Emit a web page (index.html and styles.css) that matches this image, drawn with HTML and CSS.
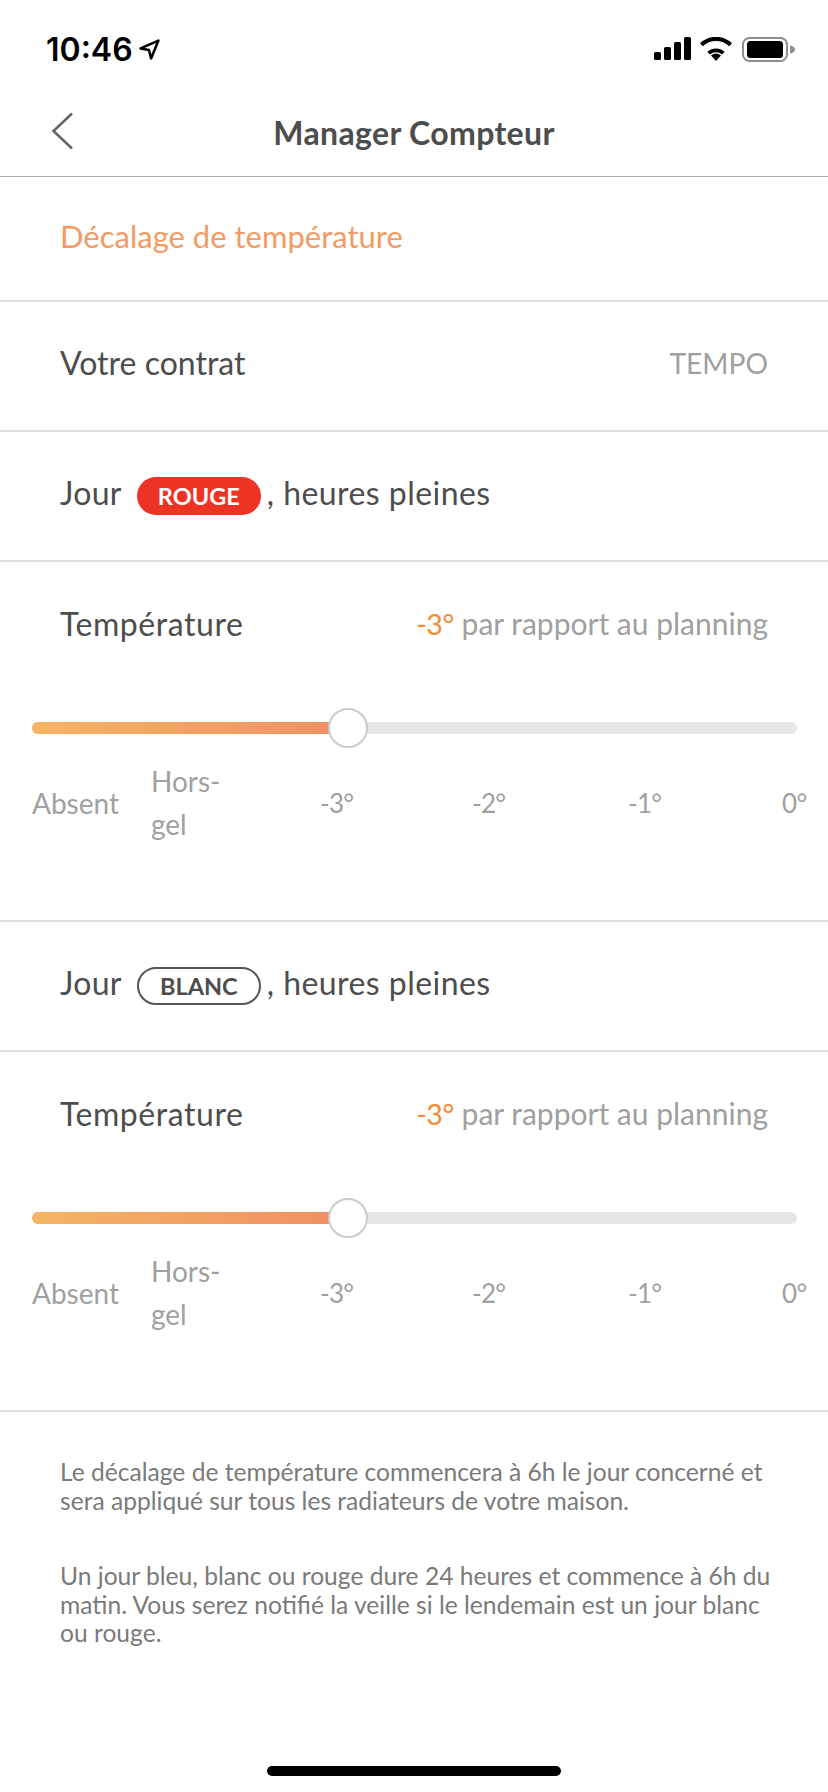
FILE: index.html
```html
<!DOCTYPE html>
<html lang="fr">
<head>
<meta charset="utf-8">
<title>Manager Compteur</title>
<link rel="stylesheet" href="styles.css">
</head>
<body>
<div class="screen">
  <header class="statusbar">
    <div class="clock"><span>10:46</span>
      <svg class="arrow" viewBox="0 0 20 20" width="21" height="21"><path d="M1.5 9 L18.5 1.5 L11.5 18.5 L9.5 10.5 Z" fill="none" stroke="#000" stroke-width="2.4" stroke-linejoin="round"/></svg>
    </div>
    <div class="status-icons">
      <svg class="signal" viewBox="0 0 37 23" width="37" height="23"><rect x="0" y="15" width="7" height="8" rx="1.6"/><rect x="10" y="10" width="7" height="13" rx="1.6"/><rect x="20" y="5" width="7" height="18" rx="1.6"/><rect x="30" y="0" width="7" height="23" rx="1.6"/></svg>
      <svg viewBox="0 0 32 24" width="32" height="24"><path d="M16 24 L11 18.5 A7.5 7.5 0 0 1 21 18.5 Z"/><path d="M7.3 14.8 A13 13 0 0 1 24.7 14.8 L22 17.6 A9.2 9.2 0 0 0 10 17.6 Z"/><path d="M0 7.8 A23 23 0 0 1 32 7.8 L29.2 10.8 A19 19 0 0 0 2.8 10.8 Z" transform="translate(0 -1.5)"/></svg>
      <svg viewBox="0 0 53 25" width="53" height="25"><rect x="1" y="1" width="44" height="23" rx="6.5" fill="none" stroke="#8e8e8e" stroke-width="2"/><rect x="5" y="4" width="36" height="17" rx="3.5"/><path d="M48 8.5 C51 9 53 10.5 53 12.5 C53 14.5 51 16 48 16.5 Z" fill="#8e8e8e"/></svg>
    </div>
  </header>
  <nav class="navbar">
    <svg class="back" viewBox="0 0 23 38" width="23" height="38"><path d="M21 1.5 L2.5 19 L21 36.5" fill="none" stroke="#666" stroke-width="2.6"/></svg>
    <h1 class="title">Manager Compteur</h1>
  </nav>
  <section class="row row-heading"><span class="accent">Décalage de température</span></section>
  <section class="row row-spread"><span class="contract">Votre contrat</span><span class="muted tempo">TEMPO</span></section>
  <section class="row"><span class="jour">Jour</span><span class="pill pill-red">ROUGE</span><span class="hours">, heures pleines</span></section>
  <section class="temp">
    <div class="temp-head"><span class="temp-label">Température</span><span class="muted plan"><em class="value">-3°</em> par rapport au planning</span></div>
    <div class="track"><div class="fill"></div><div class="thumb"></div></div>
    <div class="scale"><span>Absent</span><span>Hors-<br>gel</span><span class="deg">-3°</span><span class="deg">-2°</span><span class="deg">-1°</span><span class="deg">0°</span></div>
  </section>
  <section class="row"><span class="jour">Jour</span><span class="pill pill-white">BLANC</span><span class="hours">, heures pleines</span></section>
  <section class="temp">
    <div class="temp-head"><span class="temp-label">Température</span><span class="muted plan"><em class="value">-3°</em> par rapport au planning</span></div>
    <div class="track"><div class="fill"></div><div class="thumb"></div></div>
    <div class="scale"><span>Absent</span><span>Hors-<br>gel</span><span class="deg">-3°</span><span class="deg">-2°</span><span class="deg">-1°</span><span class="deg">0°</span></div>
  </section>
  <section class="notes">
    <p>Le décalage de température commencera à 6h le jour concerné et sera appliqué sur tous les radiateurs de votre maison.</p>
    <p>Un jour bleu, blanc ou rouge dure 24 heures et commence à 6h du matin. Vous serez notifié la veille si le lendemain est un jour blanc ou rouge.</p>
  </section>
  <div class="home-wrap"><div class="home"></div></div>
</div>
</body>
</html>
```
FILE: styles.css
```css
* { box-sizing: border-box; }
html, body { margin: 0; padding: 0; background: #fff; }
.screen {
  width: 828px; height: 1792px; display: flex; flex-direction: column;
  font-family: "Lato", "Liberation Sans", sans-serif; color: #4d4d4d; font-size: 32px; letter-spacing: 0.3px;
  overflow: hidden;
}
.statusbar { height: 88px; display: flex; justify-content: space-between; align-items: flex-start; padding: 37px 33px 0 46px; letter-spacing: 0; }
.clock { display: flex; align-items: center; gap: 6px; font-family: "Inter", sans-serif; font-weight: 600; font-size: 32px; line-height: 26px; color: #000; }
.arrow { margin-top: -1px; }
.status-icons { display: flex; align-items: flex-start; gap: 10px; }
.signal { margin-right: -1px; }
.navbar { height: 89px; display: flex; align-items: center; justify-content: center; position: relative; border-bottom: 1px solid #aaa; }
.back { position: absolute; left: 51px; top: 24px; }
.title { margin: 0; font-size: 32px; font-weight: 700; color: #4d4d4d; letter-spacing: 0.35px; }
.row { height: 130px; display: flex; align-items: center; padding: 0 60px 7px; border-bottom: 2px solid #e0e0e0; flex: none; }
.row-heading { height: 125px; padding-bottom: 6px; }
.row-spread { justify-content: space-between; }
.accent { color: #f29b62; font-size: 31px; letter-spacing: 0; }
.contract { letter-spacing: 0; }
.hours { letter-spacing: 0.45px; }
.temp-label { letter-spacing: 0.55px; }
.muted { color: #a0a0a0; }
.tempo { font-size: 28.2px; letter-spacing: 0; }
.plan { font-size: 30px; letter-spacing: 0; }
.jour { margin-right: 15px; }
.pill { display: flex; align-items: center; justify-content: center; width: 124px; height: 38px; margin-top: 7px; border-radius: 19px; font-size: 23.5px; font-weight: 700; margin-right: 6px; letter-spacing: 0; }
.pill-red { background: #ec3324; color: #fff; }
.pill-white { border: 2px solid #555; color: #4d4d4d; }
.temp { height: 360px; flex: none; border-bottom: 2px solid #e0e0e0; }
.temp-head { height: 130px; display: flex; justify-content: space-between; align-items: center; padding: 0 60px 8px; }
.value { color: #f58a30; font-style: normal; font-size: 28.5px; letter-spacing: -0.4px; }
.track { position: relative; height: 12px; margin: 30px 31px 0 32px; background: #e6e6e6; border-radius: 6px; }
.fill { width: 300px; height: 12px; border-radius: 6px 0 0 6px; background: linear-gradient(90deg, #f4b564, #f19065); }
.thumb { position: absolute; left: 296px; top: -14px; width: 40px; height: 40px; border-radius: 50%; background: #fff; border: 2px solid #cbcbcb; }
.scale { display: grid; grid-template-columns: 119px 169px 152px 156px 154px auto; align-items: center; margin: 26px 0 0 32px; color: #a0a0a0; font-size: 28px; letter-spacing: 0; line-height: 43px; }
.deg { font-size: 26px; letter-spacing: -0.7px; }
.notes { padding: 46px 52px 0 60px; font-size: 24.6px; letter-spacing: 0; line-height: 28.6px; color: #7a7a7a; flex: 1; }
.notes p { margin: 0 0 47px; }
.home-wrap { flex: none; height: 26px; display: flex; justify-content: center; }
.home { width: 294px; height: 10px; border-radius: 5px; background: #000; }
```
